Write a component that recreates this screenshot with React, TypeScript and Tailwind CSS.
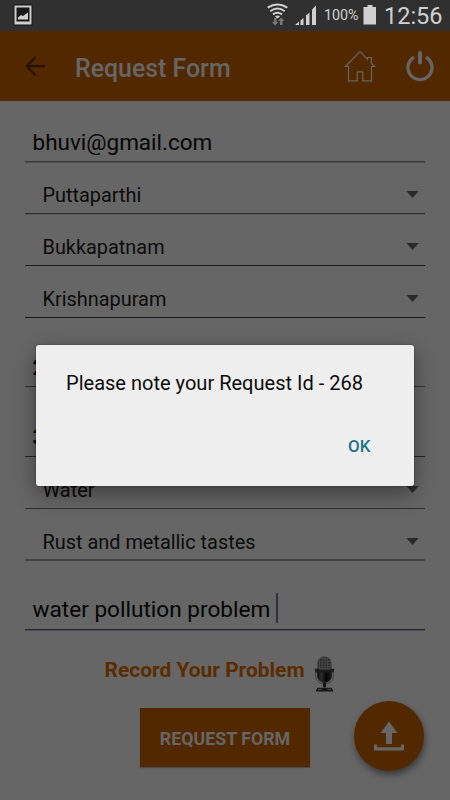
import React from "react";

function Field({ children, className = "" }: { children: React.ReactNode; className?: string }) {
  return (
    <div className={"flex w-[400px] items-end border-b px-[7.5px] text-[22.5px] leading-[26px] text-[#050505] " + className}>
      {children}
    </div>
  );
}

function Spinner({ label, line }: { label: string; line: string }) {
  return (
    <div className={"flex h-[52px] w-[400px] items-end justify-between pr-[6px] pl-[17.5px] " + line}>
      <span className="text-[19.9px] leading-[24px] text-[#0b0b0b]">{label}</span>
      <svg className="mb-[9.5px] h-[7px] w-[13px]" viewBox="0 0 13 7">
        <path d="M0.3 0h12.4L6.5 7z" fill="#2a2a2a" />
      </svg>
    </div>
  );
}

function PictureIcon() {
  return (
    <svg className="mt-[4px] ml-[13px] h-[22px] w-[20px] shrink-0" viewBox="13 4 20 22">
      <rect x="13.500" y="4.500" width="19" height="21" rx="1" fill="#111" />
      <rect x="14.500" y="5.500" width="17" height="19" fill="#cfcfcf" />
      <rect x="16.500" y="7.500" width="13" height="14" fill="#181818" />
      <path d="M18 19.500v-2l3-2.500 2 1 5-3.500v7z" fill="#cfcfcf" />
    </svg>
  );
}

function SignalIcons() {
  return (
    <svg className="ml-auto h-[31px] w-[58px] shrink-0" viewBox="266 0 58 31">
      <g fill="none" stroke="#d0d0d0" strokeWidth="2">
        <path d="M267.700 7.700Q277.500 1.200 287.300 7.700" />
        <path d="M270.300 11.200Q277.500 6 284.700 11.200" />
        <path d="M273 14.400Q277.500 11 282 14.400" />
      </g>
      <path d="M275 16.400q2.500-1.700 5 0l-2.500 2z" fill="#d0d0d0" />
      <path d="M274 18h2.500v4h2l-3.300 3.400L272 22h2zM280 25h2.500v-4h2l-3.300-3.400L278 21h2z" fill="#777" />
      <g fill="#d0d0d0">
        <path d="M295 25l4-3.500V25z" />
        <path d="M300.500 20.500l3-2.500v7h-3z" />
        <path d="M306 15.500l3.500-3V25H306z" />
        <path d="M312 9.500l4-4V25h-4z" />
      </g>
    </svg>
  );
}

function Microphone() {
  return (
    <svg className="h-[36px] w-[21px]" viewBox="0 0 22 38">
      <defs>
        <pattern id="grille" width="3" height="3" patternUnits="userSpaceOnUse">
          <rect width="3" height="3" fill="#4a4a4a" />
          <circle cx="1" cy="1" r="1" fill="#1c1c1c" />
        </pattern>
        <linearGradient id="body">
          <stop offset="0" stopColor="#111" />
          <stop offset="0.3" stopColor="#2b2b2b" />
          <stop offset="0.6" stopColor="#050505" />
          <stop offset="1" stopColor="#1c1c1c" />
        </linearGradient>
      </defs>
      <path d="M1.800 16v5c0 6 4.500 8.500 9.200 8.500s9.200-2.500 9.200-8.500v-5" fill="none" stroke="#3c3c3c" strokeWidth="1" />
      <path d="M4 14V8C4 3.500 7 1 11 1s7 2.500 7 7v6z" fill="url(#grille)" stroke="#303030" strokeWidth="0.700" />
      <path d="M3.300 14h15.400v6.500c0 5-3.400 7.500-7.700 7.500s-7.700-2.500-7.700-7.500z" fill="url(#body)" />
      <path d="M0.500 13.500h21l-1 4h-19z" fill="#1c1c1c" />
      <path d="M5 13.700h12" stroke="#666" strokeWidth="0.800" />
      <path d="M9.500 28h3v5h-3z" fill="#111" />
      <path d="M3.500 33.500h15l2 4h-19z" fill="#161616" />
      <path d="M4 35.200h4M14 35.200h4" stroke="#666" strokeWidth="0.800" />
    </svg>
  );
}

export default function App() {
  return (
    <div className="relative h-[800px] w-[450px] overflow-hidden bg-[#666666] font-['Roboto',sans-serif]">
      <div className="flex h-[31px] bg-[#303030] text-[#d0d0d0]">
        <PictureIcon />
        <SignalIcons />
        <span className="w-[38.5px] shrink-0 text-[14.3px] leading-[31px] whitespace-nowrap">100%</span>
        <svg className="h-[31px] w-[14px] shrink-0" viewBox="0 0 14 31">
          <path d="M4.500 5h5v2h3.500v17.500H0.500V7h4z" fill="#d0d0d0" />
        </svg>
        <span className="ml-[7.5px] w-[66px] shrink-0 text-[23.5px] leading-[33px] whitespace-nowrap">12:56</span>
      </div>

      <header className="flex h-[70px] items-center bg-[#522800]">
        <svg className="ml-[25px] h-[20px] w-[20px]" viewBox="0 0 20 20" fill="none" stroke="#241200" strokeWidth="2.200">
          <path d="M20 10.200H2M10.500 1.200L1.700 10.200l8.800 9" />
        </svg>
        <h1 className="ml-[30px] w-[239px] pt-[5px] text-[24.9px] font-medium text-[#666666]">Request Form</h1>
        <svg className="ml-[30px] h-[32px] w-[32px]" viewBox="0 0 32 32" fill="none" stroke="#666" strokeWidth="1.200">
          <path d="M1.500 16.500L16 1.600l7.500 7.700V7.500h3.800v5.700l3.400 3.300h-3.200v14.300h-8.700v-9h-5.600v9H4.500V16.500z" />
        </svg>
        <svg className="ml-[29px] h-[32px] w-[30px]" viewBox="0 0 30 32" fill="none" stroke="#666">
          <path d="M9 7.200a12 12 0 1 0 12 0" strokeWidth="3.300" />
          <path d="M15 3v9.500" strokeWidth="4" strokeLinecap="round" />
        </svg>
      </header>

      <main className="flex flex-col items-start pl-[25px]">
        <Field className="h-[61px] border-[#3b3b3b] pb-[6px] shadow-[0_1px_0_#525252]">bhuvi@gmail.com</Field>
        <Spinner label="Puttaparthi" line="border-b pb-[5.5px] border-[#2e2e2e] shadow-[0_1px_0_#585858]" />
        <Spinner label="Bukkapatnam" line="border-b pb-[5.5px] border-[#1c1c1c]" />
        <Spinner label="Krishnapuram" line="border-b pb-[5.5px] border-[#1c1c1c]" />
        <Field className="h-[69px] border-[#303030] pb-[6px] font-bold">2</Field>
        <Field className="h-[70px] border-[#252525] pb-[6px] font-bold">3</Field>
        <Spinner label="Water" line="border-b pb-[5.5px] border-[#303030]" />
        <Spinner label="Rust and metallic tastes" line="border-b-2 pb-[4.5px] border-[#444444]" />
        <Field className="h-[69px] border-[#252530] pb-[6px] shadow-[0_1px_0_#50505a]">
          <span className="text-[22.6px]">water pollution problem</span>
          <span className="ml-[6px] h-[30px] w-[2px] bg-[#303038]" />
        </Field>
      </main>

      <div className="flex h-[78px] items-start pt-[26px] pl-[104.5px]">
        <span className="w-[209.5px] text-[20.95px] leading-[28px] font-bold whitespace-nowrap text-[#5a2c00]">Record Your Problem</span>
        <Microphone />
      </div>
      <div className="flex items-start pl-[140px]">
        <button className="h-[59px] w-[170px] bg-[#522800] pt-[3px] text-[17.8px] font-bold text-[#666666] shadow-[0_1px_1px_rgba(0,0,0,0.25)]">REQUEST FORM</button>
        <button className="-mt-[7px] ml-[44px] flex h-[70px] w-[70px] items-center justify-center rounded-full bg-[#522800] shadow-[1px_4px_7px_rgba(0,0,0,0.45)]">
          <svg className="h-[30px] w-[30px]" viewBox="0 0 30 30" fill="#666">
            <path d="M15 0.500l8.500 11.500h-5.500v11h-6V12H6.500zM0 23.500h3v2.800h24v-2.800h3V29.500H0z" />
          </svg>
        </button>
      </div>

      <div role="dialog" className="absolute top-[345px] left-[36px] flex h-[141px] w-[378px] flex-col rounded-[3px] bg-[#eeeeee] shadow-[0_8px_22px_rgba(0,0,0,0.4),0_0_2px_rgba(0,0,0,0.45)]">
        <p className="mt-[24px] ml-[30px] text-[20.05px] leading-[28px] whitespace-nowrap text-[#0c0c0c]">Please note your Request Id - 268</p>
        <button className="mt-[37px] mr-[43.5px] self-end text-[17px] leading-[24px] font-medium text-[#207486]">OK</button>
      </div>
    </div>
  );
}
